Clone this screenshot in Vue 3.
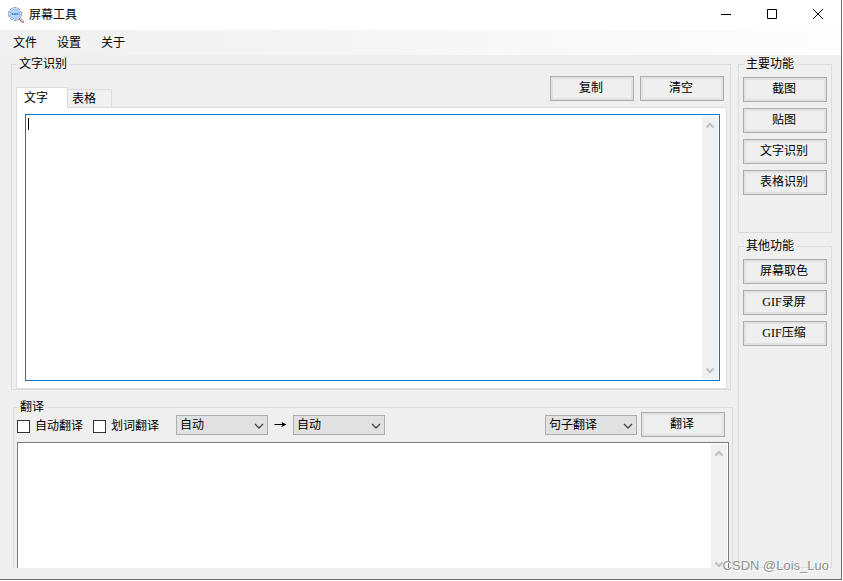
<template>
  <div class="window">
    <header class="titlebar">
      <svg class="app-icon" viewBox="0 0 16 16" aria-hidden="true">
        <path d="M11 11l3.8 3.8" stroke="#8a7fa8" stroke-width="2.6" stroke-linecap="round" />
        <path d="M12.2 12l2.6 2.7" stroke="#ecc0d2" stroke-width="1.2" stroke-linecap="round" />
        <circle cx="7" cy="7" r="6.4" fill="#e6edf9" stroke="#6f7dab" stroke-width="1" stroke-dasharray="3 1" />
        <circle cx="7" cy="7" r="4.8" fill="#addaff" stroke="#8ba9dc" stroke-width="0.8" />
        <path d="M4 6.3h1.5v1.5H4zM6.3 6.3h1.5v1.5H6.3zM8.6 6.3h1.5v1.5H8.6z" fill="#3c5590" />
      </svg>
      <h1 class="title">屏幕工具</h1>
      <div class="window-controls">
        <button type="button" aria-label="最小化">
          <svg viewBox="0 0 10 10"><path d="M0 5.5h10" /></svg>
        </button>
        <button type="button" aria-label="最大化">
          <svg viewBox="0 0 10 10"><path d="M.5.5h9v9h-9z" /></svg>
        </button>
        <button type="button" aria-label="关闭">
          <svg viewBox="0 0 10 10"><path d="M0 0l10 10M10 0L0 10" /></svg>
        </button>
      </div>
    </header>

    <nav class="menubar">
      <button v-for="item in menus" :key="item" type="button">{{ item }}</button>
    </nav>

    <main class="content">
      <div class="left">
        <fieldset class="group ocr">
          <legend>文字识别</legend>
          <div class="tab-row">
            <div class="tabs" role="tablist">
              <button
                v-for="tab in tabs"
                :key="tab"
                type="button"
                role="tab"
                class="tab"
                :class="{ active: tab === activeTab }"
                :aria-selected="tab === activeTab"
                @click="activeTab = tab"
              >{{ tab }}</button>
            </div>
            <div class="actions">
              <button type="button" class="btn">复制</button>
              <button type="button" class="btn" @click="ocrText = ''">清空</button>
            </div>
          </div>
          <div class="tab-panel" role="tabpanel">
            <div class="editor focused">
              <span class="caret" aria-hidden="true"></span>
              <textarea v-model="ocrText" aria-label="文字识别"></textarea>
              <div class="scrollbar" aria-hidden="true">
                <svg viewBox="0 0 8 6"><path d="M.5 5.5L4 2l3.5 3.5" /></svg>
                <svg viewBox="0 0 8 6"><path d="M.5.5L4 4 7.5.5" /></svg>
              </div>
            </div>
          </div>
        </fieldset>

        <fieldset class="group translate">
          <legend>翻译</legend>
          <div class="toolbar">
            <label class="check"><input v-model="autoTranslate" type="checkbox" />自动翻译</label>
            <label class="check"><input v-model="wordTranslate" type="checkbox" />划词翻译</label>
            <div class="languages">
              <span class="select">
                <select aria-label="源语言"><option>自动</option></select>
                <svg viewBox="0 0 10 6"><path d="M1 1l4 4 4-4" /></svg>
              </span>
              <svg class="arrow" viewBox="0 0 12 7" aria-hidden="true">
                <path d="M0 3.5h10" stroke="#000" />
                <path d="M7 1l5 2.5L7 6l1-2.5z" />
              </svg>
              <span class="select">
                <select aria-label="目标语言"><option>自动</option></select>
                <svg viewBox="0 0 10 6"><path d="M1 1l4 4 4-4" /></svg>
              </span>
            </div>
            <div class="submit">
              <span class="select">
                <select aria-label="翻译方式"><option>句子翻译</option></select>
                <svg viewBox="0 0 10 6"><path d="M1 1l4 4 4-4" /></svg>
              </span>
              <button type="button" class="btn">翻译</button>
            </div>
          </div>
          <div class="editor">
            <textarea v-model="translateText" aria-label="翻译"></textarea>
            <div class="scrollbar" aria-hidden="true">
              <svg viewBox="0 0 8 6"><path d="M.5 5.5L4 2l3.5 3.5" /></svg>
              <svg viewBox="0 0 8 6"><path d="M.5.5L4 4 7.5.5" /></svg>
            </div>
          </div>
        </fieldset>
      </div>

      <aside class="right">
        <fieldset class="group main-tools">
          <legend>主要功能</legend>
          <button v-for="tool in mainTools" :key="tool" type="button" class="btn">{{ tool }}</button>
        </fieldset>
        <fieldset class="group other-tools">
          <legend>其他功能</legend>
          <button v-for="tool in otherTools" :key="tool" type="button" class="btn">{{ tool }}</button>
        </fieldset>
      </aside>
    </main>

    <span class="watermark">CSDN @Lois_Luo</span>
  </div>
</template>

<script setup>
import { ref } from 'vue'

const menus = ['文件', '设置', '关于']
const tabs = ['文字', '表格']
const mainTools = ['截图', '贴图', '文字识别', '表格识别']
const otherTools = ['屏幕取色', 'GIF录屏', 'GIF压缩']

const activeTab = ref('文字')
const ocrText = ref('')
const translateText = ref('')
const autoTranslate = ref(false)
const wordTranslate = ref(false)
</script>

<style>
body {
  background: #fff;
}
</style>

<style scoped>
.window {
  position: relative;
  display: flex;
  flex-direction: column;
  box-sizing: border-box;
  min-height: calc(100vh - 1px);
  margin-right: 1px;
  border: solid #6b6b6b;
  border-width: 0 1px 1px 0;
  background: #efefef;
  color: #000;
  font-family: "Liberation Serif", "Noto Sans CJK SC", sans-serif;
  font-size: 12px;
  line-height: 15px;
}

button,
select,
textarea {
  box-sizing: border-box;
  margin: 0;
  border-radius: 0;
  color: inherit;
  font: inherit;
}

.titlebar {
  display: flex;
  align-items: center;
  height: 30px;
  padding-left: 8px;
  background: #fff;
}

.app-icon {
  width: 16px;
  height: 16px;
}

.title {
  margin: 0 0 0 5px;
  font-size: 12px;
  font-weight: 400;
}

.window-controls {
  display: flex;
  height: 100%;
  margin-left: auto;
}

.window-controls button {
  display: flex;
  align-items: center;
  justify-content: center;
  width: 46px;
  padding: 0 0 2px;
  border: 0;
  background: none;
}

.window-controls svg {
  width: 10px;
  height: 10px;
  fill: none;
  stroke: #000;
}

.menubar {
  display: flex;
  height: 25px;
  padding-left: 3px;
  background: linear-gradient(to right, #f0f0f0, #fdfdfd);
}

.menubar button {
  width: 44px;
  padding: 2px 0 0;
  border: 0;
  background: none;
}

.content {
  display: flex;
  flex: 1;
  gap: 5px;
  padding: 2px 9px 11px 11px;
}

.left {
  display: flex;
  flex: 1;
  flex-direction: column;
  gap: 10px;
  min-width: 0;
}

.right {
  display: flex;
  flex-direction: column;
  gap: 6px;
  width: 94px;
}

.group {
  display: flex;
  flex-direction: column;
  box-sizing: border-box;
  min-width: 0;
  margin: 0;
  padding: 0 3px;
  border: 1px solid #dcdcdc;
}

.group legend {
  margin-left: 1px;
  padding: 0 2px;
}

.ocr {
  flex: 2 1 333px;
  margin-right: 2px;
  padding-left: 4px;
}

.translate {
  flex: 1 1 168px;
  margin-left: 2px;
  border-bottom: 0;
}

.main-tools,
.other-tools {
  gap: 6px;
  padding: 5px 4px;
}

.main-tools {
  flex: 0 0 176px;
}

.other-tools {
  flex: 1;
}

.btn {
  width: 84px;
  height: 25px;
  padding: 0 2px 0 0;
  border: 1px solid #adadad;
  background: #efefef;
  box-shadow: inset 0 0 0 2px #e1e1e1;
}

.tab-row {
  display: flex;
  justify-content: space-between;
  height: 35px;
}

.tabs {
  display: flex;
  align-items: flex-end;
}

.tab {
  height: 18px;
  padding: 2px 15px 0 4px;
  border: 1px solid #dcdcdc;
  border-width: 1px 1px 0 0;
  background: #f0f0f0;
}

.tab.active {
  z-index: 1;
  height: 21px;
  margin-bottom: -1px;
  padding: 0 19px 0 7px;
  border-left-width: 1px;
  background: #fff;
}

.actions {
  display: flex;
  gap: 6px;
  margin: 4px 3px 0 0;
}

.tab-panel {
  display: flex;
  flex: 1;
  padding: 6px 6px 7px 8px;
  border: 1px solid #dcdcdc;
  background: #fff;
}

.editor {
  position: relative;
  display: flex;
  flex: 1;
  border: 1px solid #7a7a7a;
  background: #fff;
}

.editor.focused {
  border-color: #0078d7;
}

.editor textarea {
  flex: 1;
  min-width: 0;
  padding: 2px;
  border: 0;
  outline: 0;
  background: none;
  resize: none;
}

.caret {
  position: absolute;
  top: 3px;
  left: 2px;
  width: 1px;
  height: 12px;
  background: #000;
}

.scrollbar {
  display: flex;
  flex-direction: column;
  align-items: center;
  justify-content: space-between;
  box-sizing: border-box;
  width: 16px;
  margin: 1px 1px 1px 0;
  padding: 6px 0 5px;
  background: #f0f0f0;
}

.scrollbar svg {
  width: 8px;
  height: 6px;
  fill: none;
  stroke: #bfbfbf;
  stroke-width: 2;
}

.toolbar {
  display: flex;
  align-items: center;
  height: 25px;
  margin: -3px 4px 5px 0;
}

.translate .editor {
  border-bottom: 0;
}

.translate .scrollbar {
  margin-bottom: 0;
  padding-bottom: 0;
}

.check {
  display: flex;
  align-items: center;
  gap: 5px;
  margin-right: 10px;
  padding-top: 3px;
}

.check input {
  appearance: none;
  width: 13px;
  height: 13px;
  margin: 0;
  border: 1px solid #333;
  background: #fff;
}

.check input:checked {
  background: #0078d7;
}

.languages {
  display: flex;
  align-items: center;
  gap: 6px;
  margin-left: 7px;
}

.arrow {
  width: 13px;
  height: 7px;
}

.submit {
  display: flex;
  align-items: center;
  gap: 4px;
  margin-left: auto;
}

.select {
  position: relative;
  display: flex;
}

.select select {
  appearance: none;
  width: 92px;
  height: 20px;
  padding: 2px 18px 0 3px;
  border: 1px solid #adadad;
  background: #e1e1e1;
}

.select svg {
  position: absolute;
  top: 8px;
  right: 4px;
  width: 10px;
  height: 6px;
  fill: none;
  stroke: #444;
  stroke-width: 1.3;
  pointer-events: none;
}

.watermark {
  position: absolute;
  right: 12px;
  bottom: 6px;
  color: #909090;
  font-family: "Liberation Sans", Arial, sans-serif;
  font-size: 13px;
  text-shadow: 1px 1px 0 #fff;
}
</style>
